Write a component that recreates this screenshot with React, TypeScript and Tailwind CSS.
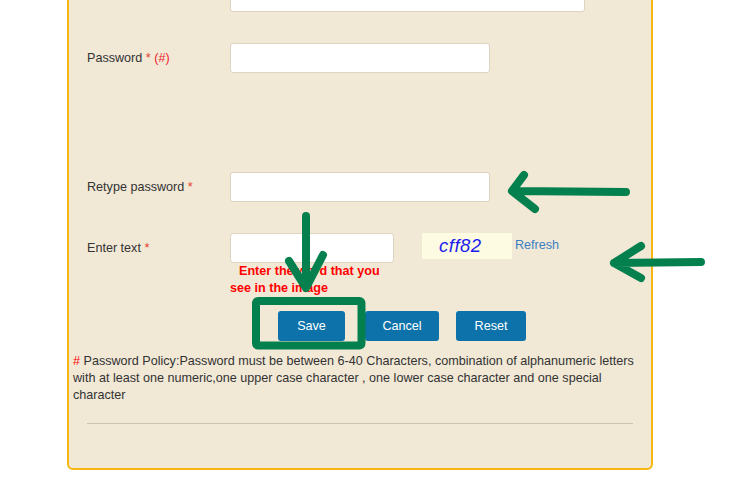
import React from 'react';

const Req = () => <span className="text-[#e8412f]"> *</span>;

const Field: React.FC<{ label: React.ReactNode; children: React.ReactNode; className?: string }> = ({
  label,
  children,
  className = ''
}) => (
  <div className={`flex items-start pl-[18px] ${className}`}>
    <label className="w-[143px] shrink-0 leading-[30px] text-[#333]">{label}</label>
    <div>{children}</div>
  </div>
);

const inputCls = 'block h-[30px] bg-white border border-[#ddd4c1] rounded-[3px]';
const btnCls =
  'h-[30px] rounded-[3px] bg-[#0d72a9] text-white text-[12.6px] flex items-center justify-center';

const Arrows = () => (
  <svg
    className="absolute inset-0 pointer-events-none"
    width="733"
    height="501"
    viewBox="0 0 733 501"
    fill="none"
    stroke="#04804f"
    strokeWidth="8"
    strokeLinecap="round"
    strokeLinejoin="round"
  >
    <path d="M306 216 L306 286 M289 261 L306 288 L323 255" />
    <path d="M626 192 L513 191 M524 175 L512 191 L535 209" />
    <path d="M701 262 L614 263 M641 246 L614 263 L641 278" />
    <rect x="256" y="301" width="105.5" height="44.5" rx="2" />
  </svg>
);

export default function App() {
  return (
    <div
      className="relative w-[733px] h-[501px] overflow-hidden bg-white text-[12.6px]"
      style={{ fontFamily: '"Liberation Sans", Arial, sans-serif' }}
    >
      <div className="-mt-[40px] ml-[67px] w-[586px] h-[510px] border-2 border-[#f6b50f] rounded-[6px] bg-[#f1e8d6] pt-[20px]">
        <Field label={<span>&nbsp;</span>}>
          <div className={`${inputCls} w-[355px]`} />
        </Field>

        <Field className="mt-[31px]" label={<>Password<Req /><span className="text-[#f0202c]"> (#)</span></>}>
          <div className={`${inputCls} w-[260px]`} />
        </Field>

        <Field className="mt-[99px]" label={<>Retype password<Req /></>}>
          <div className={`${inputCls} w-[260px]`} />
        </Field>

        <Field className="mt-[31px]" label={<>Enter text<Req /></>}>
          <div className="flex items-start">
            <div className={`${inputCls} w-[164px]`} />
            <div className="ml-[28px] w-[90px] h-[26px] bg-[#fdfbe1] flex items-center pl-[17px]">
              <span className="italic text-[18.5px] text-[#1c1cee] tracking-[0.5px]">cff82</span>
            </div>
            <a className="ml-[3px] leading-[25px] text-[#3b7fc2]">Refresh</a>
          </div>
          <div className="w-[160px] font-bold text-[#f00] leading-[17px] indent-[9px]">
            Enter the word that you see in the image
          </div>
        </Field>

        <div className="flex mt-[14px] pl-[209px]">
          <button className={`${btnCls} w-[67px]`}>Save</button>
          <button className={`${btnCls} w-[74px] ml-[20px]`}>Cancel</button>
          <button className={`${btnCls} w-[70px] ml-[17px]`}>Reset</button>
        </div>

        <p className="mt-[12px] pl-[4px] pr-[6px] leading-[17px] text-[#333]">
          <span className="text-[#f00]">#</span> Password Policy:Password must be between 6-40 Characters,
          combination of alphanumeric letters with at least one numeric,one upper case character , one lower
          case character and one special character
        </p>

        <hr className="mt-[19px] mx-[18px] border-0 border-t border-[#cbc4b6]" />
      </div>
      <Arrows />
    </div>
  );
}
